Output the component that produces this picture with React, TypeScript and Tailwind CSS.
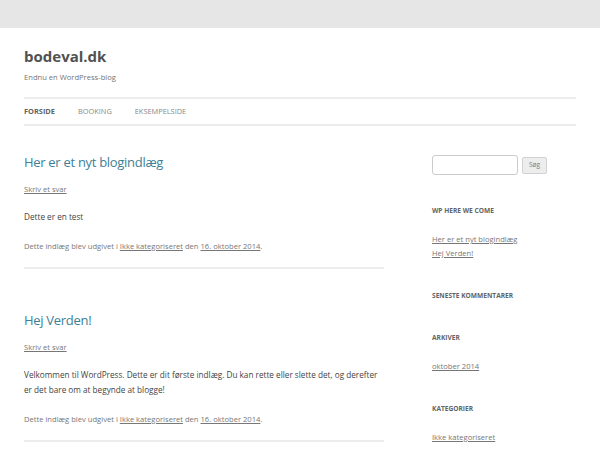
const font = { fontFamily: '"Open Sans", "Liberation Sans", sans-serif' };

function Post({ title, body }: { title: string; body: React.ReactNode }) {
  return (
    <article className="border-b-[2px] border-[#ededed] pb-[14px] mb-[42px]">
      <h1 className="text-[13px] leading-[18px] tracking-[-0.3px] text-[#3d7f96]">{title}</h1>
      <p className="mt-[11px] text-[7.6px] leading-[14px] text-[#777] underline">Skriv et svar</p>
      <div className="mt-[13px] text-[8.2px] leading-[15px] text-[#444]">{body}</div>
      <p className="mt-[15px] text-[7.6px] leading-[14px] text-[#777]">
        Dette indlæg blev udgivet i <span className="underline">Ikke kategoriseret</span> den{" "}
        <span className="underline">16. oktober 2014</span>.
      </p>
    </article>
  );
}

function Widget({ title, links }: { title: string; links: string[] }) {
  return (
    <section className={links.length > 0 ? "mb-[29px]" : "mb-[28px]"}>
      <h3 className="text-[6.6px] leading-[14px] font-bold uppercase text-[#636363]">{title}</h3>
      {links.length > 0 && (
        <ul className="mt-[14px] text-[7.6px] leading-[14px] text-[#777]">
          {links.map((l) => (
            <li key={l} className="underline">{l}</li>
          ))}
        </ul>
      )}
    </section>
  );
}

export default function App() {
  return (
    <div className="w-[600px] h-[450px] overflow-hidden bg-white" style={font}>
      <div className="h-[28px] bg-[#e6e6e6]" />
      <div className="px-[24px]">
        <header className="pt-[17px]">
          <div className="text-[15px] leading-[22px] font-bold text-[#515151]">bodeval.dk</div>
          <div className="mt-[4px] text-[7.6px] leading-[12px] text-[#757575]">Endnu en WordPress-blog</div>
        </header>
        <nav className="mt-[14px] border-t-[2px] border-b-[2px] border-[#ededed] h-[29px] flex items-center gap-[23px] text-[7.4px] uppercase text-[#888]">
          <span className="font-bold text-[#636363]">Forside</span>
          <span>Booking</span>
          <span>Eksempelside</span>
        </nav>
        <div className="flex gap-[48px] mt-[27px]">
          <main className="w-[360px]">
            <Post title="Her er et nyt blogindlæg" body={<p>Dette er en test</p>} />
            <Post
              title="Hej Verden!"
              body={
                <p>
                  Velkommen til WordPress. Dette er dit første indlæg. Du kan rette eller slette det, og derefter er
                  det bare om at begynde at blogge!
                </p>
              }
            />
          </main>
          <aside className="w-[144px] pt-[2px]">
            <div className="flex items-center gap-[4px] mb-[29px]">
              <div className="w-[86px] h-[20px] rounded-[3px] border border-[#ccc] bg-white" />
              <button className="h-[17px] px-[6px] rounded-[2px] border border-[#d2d2d2] bg-[#ededed] text-[6.6px] text-[#7c7c7c]">
                Søg
              </button>
            </div>
            <Widget title="WP here we come" links={["Her er et nyt blogindlæg", "Hej Verden!"]} />
            <Widget title="Seneste kommentarer" links={[]} />
            <Widget title="Arkiver" links={["oktober 2014"]} />
            <Widget title="Kategorier" links={["Ikke kategoriseret"]} />
          </aside>
        </div>
      </div>
    </div>
  );
}
